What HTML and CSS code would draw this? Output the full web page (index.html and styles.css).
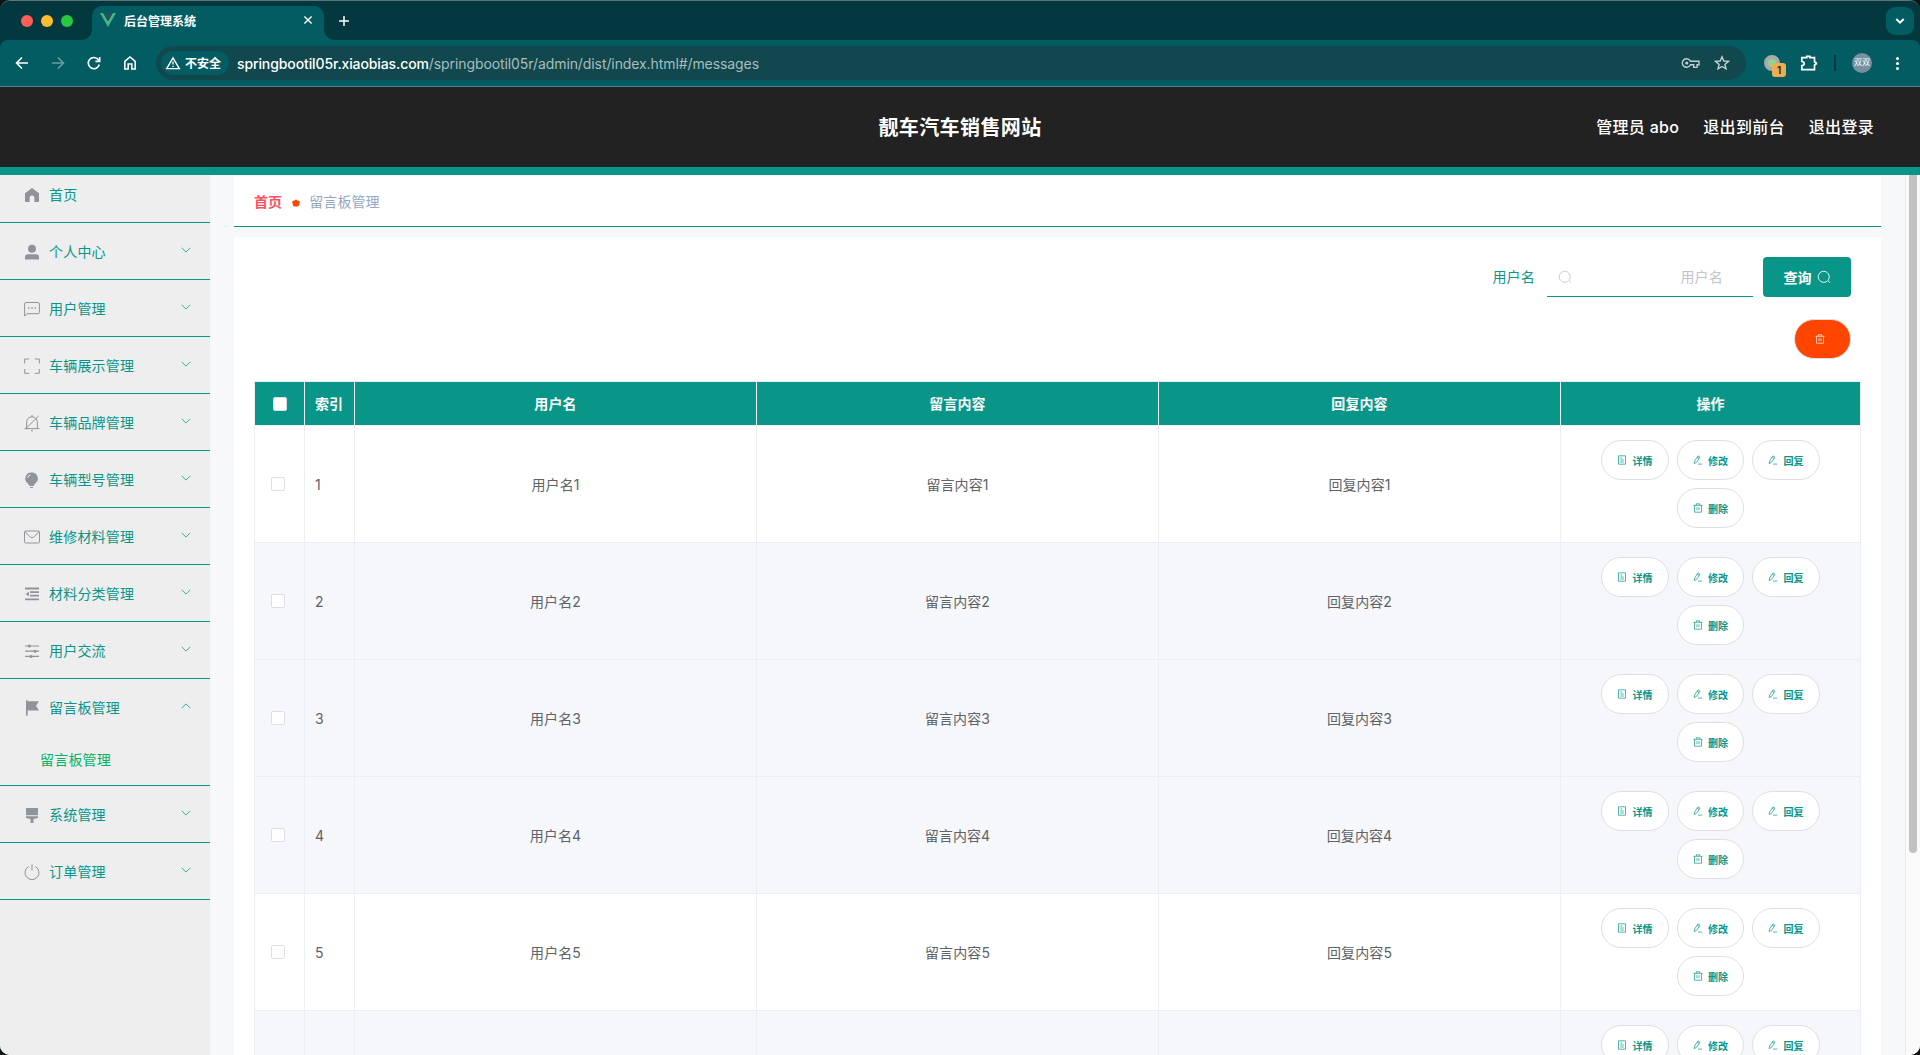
FILE: index.html
```html
<!DOCTYPE html>
<html lang="zh-CN">
<head>
    <meta charset="UTF-8">
    <meta name="viewport" content="width=device-width, initial-scale=1.0">
    <title>后台管理系统</title>
    <link rel="stylesheet" href="styles.css">
</head>
<body>
    <!-- Icons -->
    <svg class="defs" width="0" height="0">
        <symbol id="down" viewBox="0 0 10 10"><path d="M.7 2.8 5 7.1l4.3-4.3" fill="none" stroke="currentColor" stroke-width=".75"/></symbol>
        <symbol id="search" viewBox="0 0 14 14"><path d="M10.4 10.900a5.500 5.500 0 1 1 .4-.4l2.200 2.200" fill="none" stroke="currentColor" stroke-width=".9"/></symbol>
        <symbol id="doc" viewBox="0 0 10 10"><path d="M1.5.8h7v8.4h-7zM3.3 3h2M3.3 5h3.5M3.3 7h3.5" fill="none" stroke="currentColor" stroke-width=".7"/></symbol>
        <symbol id="edit" viewBox="0 0 10 10"><path d="M1.2 8.6 1.6 6 5 .9l2 1.3L3.5 7.4zM4.2 2.2l2 1.3M5 9.1h4.2" fill="none" stroke="currentColor" stroke-width=".7"/></symbol>
        <symbol id="trash" viewBox="0 0 10 10"><path d="M.5 2.300h9M3.300 2V.8h3.400V2M1.500 2.300v6.900h7V2.300M4 4.200v3M6 4.200v3" fill="none" stroke="currentColor" stroke-width=".7"/></symbol>
    </svg>

    <div class="window">
        <!-- Tab strip -->
        <div class="tabs">
            <div class="lights"><i class="red"></i><i class="yellow"></i><i class="green"></i></div>
            <div class="tab">
                <svg width="16" height="14" viewBox="0 0 16 14"><path d="M0 0h3.2L8 8.3 12.8 0H16L8 14z" fill="#41b883"/><path d="M3.2 0H6l2 3.4L10 0h2.8L8 8.3z" fill="#35495e"/></svg>
                <span>后台管理系统</span>
                <svg class="close" width="10" height="10" viewBox="0 0 10 10"><path d="M1.4 1.4l7.2 7.2M8.6 1.4 1.4 8.6" stroke="#fff" stroke-width="1.4"/></svg>
            </div>
            <svg class="plus" width="12" height="12" viewBox="0 0 12 12"><path d="M6 1v10M1 6h10" stroke="#fff" stroke-width="1.5"/></svg>
            <div class="tab-list"><svg width="10" height="8" viewBox="0 0 10 8"><path d="M1.3 2 5 5.7 8.7 2" fill="none" stroke="#fff" stroke-width="2"/></svg></div>
        </div>

        <!-- Address bar -->
        <div class="toolbar">
            <svg class="nav" viewBox="0 0 16 16"><path d="M14 8H3M8 2.5 2.5 8 8 13.5" /></svg>
            <svg class="nav dim" viewBox="0 0 16 16"><path d="M2 8h11M8 2.5 13.5 8 8 13.5" /></svg>
            <svg class="nav" viewBox="0 0 16 16"><path d="M13.3 9.5A5.6 5.6 0 1 1 12.3 4.6L13.5 6M13.7 2v4.4H9.4" /></svg>
            <svg class="nav" viewBox="0 0 16 16"><path d="M2.8 14V6.3L8 2l5.2 4.3V14H9.8V9H6.2v5z" /></svg>
            <div class="url">
                <div class="unsafe">
                    <svg width="16" height="14" viewBox="0 0 16 14"><path d="M8 1.8 14.3 12.6H1.7z" fill="none" stroke="#fff" stroke-width="1.4"/><path d="M8 5.5v3M8 9.7v1.4" stroke="#fff" stroke-width="1.3"/></svg>
                    <span>不安全</span>
                </div>
                <div class="address"><b>springbootil05r.xiaobias.com</b>/springbootil05r/admin/dist/index.html#/messages</div>
                <svg class="key" width="20" height="14" viewBox="0 0 20 14"><path d="M9.5 5.2A4.3 4.3 0 1 0 9.5 8.8h3.2v2.6h3.4V8.8H18V5.2z" fill="none" stroke="#c2d0d1" stroke-width="1.4"/><circle cx="5.8" cy="7" r="1.6" fill="#c2d0d1"/></svg>
                <svg width="16" height="16" viewBox="0 0 16 16"><path d="M8 1.8 9.8 6l4.6.4-3.5 3 1.1 4.5L8 11.5l-4 2.4 1.1-4.5-3.5-3L6.2 6z" fill="none" stroke="#c2d0d1" stroke-width="1.4"/></svg>
            </div>
            <div class="ext"><i></i><span>1</span></div>
            <svg class="puzzle" width="18" height="18" viewBox="0 0 18 18"><path d="M1.800 3.600h4.900V2.400h3.200v1.200h4.600v4.100l1.800 1.300v.8l-1.800 1.300v4.500H1.800v-3.900q2.400-.4 2.400-2.200T1.800 7.300z" fill="none" stroke="#fff" stroke-width="1.700"/></svg>
            <div class="divider"></div>
            <div class="avatar">双双</div>
            <div class="dots"><i></i><i></i><i></i></div>
        </div>

        <!-- Page header -->
        <header class="header">
            <div class="title">靓车汽车销售网站</div>
            <div class="user"><span>管理员 abo</span><span>退出到前台</span><span>退出登录</span></div>
        </header>

        <div class="container">
            <!-- Side menu -->
            <nav class="menu">
                <div class="item"><svg class="icon" viewBox="0 0 18 18"><path d="M9 2 2 7.2V16h4.600v-4a2.400 2.400 0 0 1 4.800 0v4H16V7.200z" fill="currentColor"/></svg><span>首页</span></div>
                <div class="item"><svg class="icon" viewBox="0 0 18 18"><path d="M2 16.4v-2.2q0-3 3-3h8q3 0 3 3v2.2z" fill="currentColor"/><circle cx="9" cy="5.7" r="4" fill="currentColor"/></svg><span>个人中心</span><svg class="arrow"><use href="#down"/></svg></div>
                <div class="item"><svg class="icon line" viewBox="0 0 18 18"><path d="M1.6 16V4q0-1.5 1.5-1.5h11.8q1.5 0 1.5 1.5v8.5q0 1.2-1.5 1.2H4z"/><path d="M5 8h1.4M8.3 8h1.4M11.6 8H13" stroke-width="1.4"/></svg><span>用户管理</span><svg class="arrow"><use href="#down"/></svg></div>
                <div class="item"><svg class="icon line" viewBox="0 0 18 18"><path d="M1.7 6.5V2h4.5M11.8 2h4.5v4.5M16.3 12v4.3h-4.5M6.2 16.3H1.7V12"/></svg><span>车辆展示管理</span><svg class="arrow"><use href="#down"/></svg></div>
                <div class="item"><svg class="icon line" viewBox="0 0 18 18"><path d="M1.5 14.6h15M3.6 14V8.2a5.4 5.4 0 0 1 10.8 0V14M15.6 2 2.4 15M8 16.7h2M8.2 1.8h1.6"/></svg><span>车辆品牌管理</span><svg class="arrow"><use href="#down"/></svg></div>
                <div class="item"><svg class="icon" viewBox="0 0 18 18"><path d="M8.4 1.4a6 6 0 0 0-3.4 11L6.5 15h4l1.6-2.6a6 6 0 0 0-3.7-11zM7 16h3v.9H7z" fill="currentColor"/><path d="M4.6 6.8a4 4 0 0 1 3-3" fill="none" stroke="#eee" stroke-width=".9"/></svg><span>车辆型号管理</span><svg class="arrow"><use href="#down"/></svg></div>
                <div class="item"><svg class="icon line" viewBox="0 0 18 18"><rect x="1.5" y="3" width="15" height="12" rx="1.2"/><path d="M2 3.8l5.4 5.4q1.6 1.3 3.2 0L16 3.8"/></svg><span>维修材料管理</span><svg class="arrow"><use href="#down"/></svg></div>
                <div class="item"><svg class="icon" viewBox="0 0 18 18"><path d="M2 3.5h14M7 7.2h9M7 10.7h9M2 14.3h14" stroke="currentColor" stroke-width="1.8"/><path d="M6 6.7v4.5L2.5 9z" fill="currentColor"/></svg><span>材料分类管理</span><svg class="arrow"><use href="#down"/></svg></div>
                <div class="item"><svg class="icon" viewBox="0 0 18 18"><path d="M2 4h14M2 9.2h14M2 14.4h14" stroke="currentColor" stroke-width="1.2"/><circle cx="6.4" cy="4" r="1.5" fill="currentColor"/><circle cx="12" cy="9.2" r="1.5" fill="currentColor"/><circle cx="8" cy="14.4" r="1.5" fill="currentColor"/></svg><span>用户交流</span><svg class="arrow"><use href="#down"/></svg></div>
                <div class="item open"><svg class="icon" viewBox="0 0 18 18"><path d="M3 1.2h1.6v1H16l-3 4.6 3 4.7H4.6v5.3H3z" fill="currentColor"/></svg><span>留言板管理</span><svg class="arrow up"><use href="#down"/></svg></div>
                <div class="sub">留言板管理</div>
                <div class="item"><svg class="icon" viewBox="0 0 18 18"><path d="M3 2h12v7.3H3zM3 10.3h12v1.4q-1 1-3.5 1h-1V17h-3v-4.3h-1q-2.5 0-3.5-1z" fill="currentColor"/></svg><span>系统管理</span><svg class="arrow"><use href="#down"/></svg></div>
                <div class="item"><svg class="icon line" viewBox="0 0 18 18"><path d="M5.6 3.5a7 7 0 1 0 6.8 0M9 1.4v6"/></svg><span>订单管理</span><svg class="arrow"><use href="#down"/></svg></div>
            </nav>

            <main class="main">
                <div class="breadcrumb">
                    <b>首页</b>
                    <svg class="dot" width="8" height="8" viewBox="0 0 8 8"><path d="M4 .2 5.200 1.500q2.800-.2 2.500 2.200L6.700 7q-2.700 1-5.400 0L.3 3.700Q0 1.300 2.800 1.500z" fill="#ff4500"/></svg>
                    <span>留言板管理</span>
                </div>

                <div class="card">
                    <div class="filter">
                        <label>用户名</label>
                        <div class="input"><svg width="14" height="14"><use href="#search"/></svg><span>用户名</span></div>
                        <div class="query">查询<svg width="14" height="14"><use href="#search"/></svg></div>
                    </div>
                    <div class="batch"><svg width="10" height="10"><use href="#trash"/></svg></div>

                    <table class="table">
                        <tr><th class="check"><i></i></th><th class="idx">索引</th><th>用户名</th><th>留言内容</th><th>回复内容</th><th class="ops">操作</th></tr>
                        <tr>
                            <td class="check"><i></i></td><td class="idx">1</td><td>用户名1</td><td>留言内容1</td><td>回复内容1</td>
                            <td><div class="btns">
                                <span class="btn"><svg><use href="#doc"/></svg>详情</span><span class="btn mid"><svg><use href="#edit"/></svg>修改</span><span class="btn"><svg><use href="#edit"/></svg>回复</span><span class="btn mid"><svg><use href="#trash"/></svg>删除</span>
                            </div></td>
                        </tr>
                        <tr class="grey">
                            <td class="check"><i></i></td><td class="idx">2</td><td>用户名2</td><td>留言内容2</td><td>回复内容2</td>
                            <td><div class="btns">
                                <span class="btn"><svg><use href="#doc"/></svg>详情</span><span class="btn mid"><svg><use href="#edit"/></svg>修改</span><span class="btn"><svg><use href="#edit"/></svg>回复</span><span class="btn mid"><svg><use href="#trash"/></svg>删除</span>
                            </div></td>
                        </tr>
                        <tr class="grey">
                            <td class="check"><i></i></td><td class="idx">3</td><td>用户名3</td><td>留言内容3</td><td>回复内容3</td>
                            <td><div class="btns">
                                <span class="btn"><svg><use href="#doc"/></svg>详情</span><span class="btn mid"><svg><use href="#edit"/></svg>修改</span><span class="btn"><svg><use href="#edit"/></svg>回复</span><span class="btn mid"><svg><use href="#trash"/></svg>删除</span>
                            </div></td>
                        </tr>
                        <tr class="grey">
                            <td class="check"><i></i></td><td class="idx">4</td><td>用户名4</td><td>留言内容4</td><td>回复内容4</td>
                            <td><div class="btns">
                                <span class="btn"><svg><use href="#doc"/></svg>详情</span><span class="btn mid"><svg><use href="#edit"/></svg>修改</span><span class="btn"><svg><use href="#edit"/></svg>回复</span><span class="btn mid"><svg><use href="#trash"/></svg>删除</span>
                            </div></td>
                        </tr>
                        <tr>
                            <td class="check"><i></i></td><td class="idx">5</td><td>用户名5</td><td>留言内容5</td><td>回复内容5</td>
                            <td><div class="btns">
                                <span class="btn"><svg><use href="#doc"/></svg>详情</span><span class="btn mid"><svg><use href="#edit"/></svg>修改</span><span class="btn"><svg><use href="#edit"/></svg>回复</span><span class="btn mid"><svg><use href="#trash"/></svg>删除</span>
                            </div></td>
                        </tr>
                        <!-- last row runs past the bottom of the window -->
                        <tr class="grey">
                            <td></td><td></td><td></td><td></td><td></td>
                            <td><div class="btns">
                                <span class="btn"><svg><use href="#doc"/></svg>详情</span><span class="btn mid"><svg><use href="#edit"/></svg>修改</span><span class="btn"><svg><use href="#edit"/></svg>回复</span>
                            </div></td>
                        </tr>
                    </table>
                </div>
            </main>
            <div class="scrollbar"><div class="thumb"></div></div>
        </div>
    </div>
</body>
</html>
```
FILE: styles.css
```css
* {
    box-sizing: border-box;
}
body {
    margin: 0;
    background-color: #10150f;
    font-family: Inter, "Noto Sans CJK SC", sans-serif;
    font-size: 14px;
    overflow: hidden;
}
svg {
    display: block;
    flex: none;
}
.defs {
    position: absolute;
}
.window {
    height: 1055px;
    display: flex;
    flex-direction: column;
    border-top: 1px solid #5d7676;
    border-radius: 10px;
    overflow: hidden;
    background-color: #03393e;
}

/* browser tabs */
.tabs {
    height: 39px;
    flex: none;
    display: flex;
    align-items: center;
    background-color: #03393e;
}
.lights {
    display: flex;
    gap: 8px;
    padding-left: 21px;
    width: 92px;
}
.lights i {
    width: 12px;
    height: 12px;
    border-radius: 50%;
}
.red { background-color: #ff5f57; }
.yellow { background-color: #febc2e; }
.green { background-color: #28c840; }
.tab {
    position: relative;
    align-self: flex-end;
    width: 232px;
    height: 34px;
    padding: 0 11px 6px 8px;
    display: flex;
    align-items: center;
    gap: 8px;
    border-radius: 10px 10px 0 0;
    background-color: #045c63;
    color: #fff;
    font-size: 12px;
    font-weight: 600;
}
.tab::before,
.tab::after {
    content: "";
    position: absolute;
    bottom: 0;
    width: 10px;
    height: 10px;
}
.tab::before {
    left: -10px;
    background: radial-gradient(circle at 0 0, transparent 9.5px, #045c63 10px);
}
.tab::after {
    right: -10px;
    background: radial-gradient(circle at 100% 0, transparent 9.5px, #045c63 10px);
}
.close {
    margin-left: auto;
}
.plus {
    margin-left: 14px;
}
.tab-list {
    width: 28px;
    height: 28px;
    margin-left: auto;
    margin-right: 6px;
    border-radius: 9px;
    background-color: #045c63;
    display: flex;
    align-items: center;
    justify-content: center;
}

/* browser toolbar */
.toolbar {
    height: 47px;
    flex: none;
    display: flex;
    align-items: center;
    padding-left: 14px;
    border-radius: 8px 8px 0 0;
    border-bottom: 1px solid #4f878b;
    background-color: #045c63;
}
.nav {
    width: 16px;
    height: 16px;
    margin-right: 20px;
    fill: none;
    stroke: #fff;
    stroke-width: 1.6;
}
.dim {
    opacity: .4;
}
.url {
    width: 1590px;
    height: 34px;
    margin-left: -2px;
    padding: 0 16px 0 5px;
    border-radius: 17px;
    display: flex;
    align-items: center;
    background-color: #10484e;
}
.unsafe {
    width: 68px;
    height: 24px;
    padding-left: 4px;
    border-radius: 12px;
    display: flex;
    align-items: center;
    gap: 4px;
    background-color: #045c63;
    color: #fff;
    font-size: 12px;
    font-weight: 600;
}
.unsafe span {
    margin-top: -2px;
}
.address {
    margin-left: 8px;
    flex: 1;
    color: #a9bdbf;
    font-size: 14px;
    letter-spacing: -.09px;
}
.address b {
    color: #fff;
    font-weight: 500;
    letter-spacing: -.11px;
}
.key {
    margin-right: 13px;
}
.ext {
    position: relative;
    width: 22px;
    height: 24px;
    margin-left: 18px;
}
.ext i {
    position: absolute;
    top: 4px;
    width: 16px;
    height: 16px;
    border-radius: 50%;
    border: 4px solid #a9a9a9;
    background-color: #8fd694;
}
.ext span {
    position: absolute;
    left: 8px;
    top: 12px;
    width: 14px;
    height: 14px;
    border-radius: 3px;
    background-color: #f0ad4e;
    color: #222;
    font-size: 10px;
    font-weight: 600;
    line-height: 14px;
    text-align: center;
}
.puzzle {
    margin-left: 14px;
}
.divider {
    width: 2px;
    height: 16px;
    margin: 0 16px;
    background-color: #03393e;
}
.avatar {
    width: 20px;
    height: 20px;
    border-radius: 50%;
    background-color: #78909c;
    color: #fff;
    font-size: 8px;
    line-height: 19px;
    text-align: center;
}
.dots {
    display: flex;
    flex-direction: column;
    gap: 2px;
    margin-left: 24px;
}
.dots i {
    width: 3px;
    height: 3px;
    border-radius: 50%;
    background-color: #fff;
}

/* page header */
.header {
    height: 88px;
    flex: none;
    display: grid;
    grid-template-columns: 1fr auto 1fr;
    align-items: center;
    padding: 0 46px 2px;
    border-bottom: 8px solid #099587;
    background-color: #222;
    color: #fff;
}
.title {
    grid-column: 2;
    font-size: 20px;
    font-weight: 700;
    letter-spacing: .4px;
}
.user {
    display: flex;
    justify-content: flex-end;
    gap: 24px;
    font-size: 16px;
    font-weight: 500;
    letter-spacing: .3px;
}
.container {
    flex: 1;
    min-height: 0;
    display: flex;
    background-color: #f7f8fa;
}

/* side menu */
.menu {
    width: 210px;
    flex: none;
    margin-top: -9px;
    background-color: #eee;
    color: #099587;
    letter-spacing: .2px;
    clip-path: inset(9px 0 0 0);
}
.item {
    height: 57px;
    display: flex;
    align-items: center;
    padding: 1px 19px 0 23px;
    border-bottom: 1px solid #099587;
}
.item span {
    line-height: 20px;
}
.icon {
    width: 18px;
    height: 18px;
    margin-right: 8px;
    color: #909399;
}
.line {
    fill: none;
    stroke: currentColor;
}
.arrow {
    width: 10px;
    height: 10px;
    margin-left: auto;
    margin-top: -4px;
}
.up {
    transform: rotate(180deg);
}
.open {
    height: 56px;
    border-bottom: 0;
}
.sub {
    height: 51px;
    padding-left: 40px;
    border-bottom: 1px solid #099587;
    color: #00b368;
    line-height: 50px;
}

/* content */
.main {
    flex: 1;
    padding: 1px 24px 0;
    overflow: hidden;
}
.breadcrumb {
    height: 51px;
    padding-left: 20px;
    display: flex;
    align-items: center;
    gap: 10px;
    border-bottom: 1px solid #099587;
    background-color: #fff;
    color: #97a8be;
    letter-spacing: .1px;
}
.breadcrumb b {
    color: #ff4f5e;
    font-weight: 600;
}
.dot {
    margin: 3px -1px 0 0;
}
.card {
    height: 900px;
    margin-top: 10px;
    padding: 20px;
    background-color: #fff;
}
.filter {
    display: flex;
    justify-content: flex-end;
    padding-right: 10px;
}
.filter label {
    line-height: 40px;
    color: #099587;
    letter-spacing: .2px;
    margin-right: 12px;
}
.input {
    width: 206px;
    height: 40px;
    padding: 0 30px 0 11px;
    margin-right: 10px;
    display: flex;
    align-items: center;
    justify-content: space-between;
    border-bottom: 1px solid #099587;
    color: #c0c4cc;
    letter-spacing: .2px;
}
.input span {
    margin-top: -1px;
}
.query {
    width: 88px;
    height: 40px;
    display: flex;
    align-items: center;
    justify-content: center;
    gap: 5px;
    border-radius: 4px;
    background-color: #099587;
    color: #fff;
    font-weight: 700;
}
.batch {
    width: 57px;
    height: 40px;
    margin: 22px 10px 22px auto;
    padding-right: 5px;
    display: flex;
    align-items: center;
    justify-content: center;
    border: 1px solid #dcdfe6;
    border-radius: 20px;
    background-color: #ff4500;
    color: #fff;
}
.table {
    width: 1607px;
    table-layout: fixed;
    border-collapse: separate;
    border-spacing: 0;
    border-top: 1px solid #ebeef5;
    border-left: 1px solid #ebeef5;
    color: #606266;
    letter-spacing: .1px;
}
.table th,
.table td {
    height: 117px;
    padding: 0;
    border-right: 1px solid #ebeef5;
    border-bottom: 1px solid #ebeef5;
    text-align: center;
}
.table th {
    height: 44px;
    padding-bottom: 2px;
    background-color: #099587;
    color: #fff;
    font-weight: 700;
}
.table .check {
    width: 50px;
    padding-bottom: 0;
}
.table .idx {
    width: 50px;
    padding-left: 10px;
    text-align: left;
}
.table .ops {
    width: 300px;
}
.check i {
    display: block;
    width: 14px;
    height: 14px;
    margin: 0 auto 0 16px;
    border: 1px solid #dcdfe6;
    border-radius: 2px;
    background-color: #fff;
}
th.check i {
    margin-left: 18px;
}
.grey {
    background-color: #f5f7fa;
}
.btns {
    height: 88px;
    display: flex;
    flex-wrap: wrap;
    align-content: flex-start;
    justify-content: center;
    gap: 8px;
    padding: 0 30px;
}
.btn {
    width: 68px;
    height: 40px;
    display: flex;
    align-items: center;
    justify-content: center;
    gap: 5px;
    border: 1px solid #dcdfe6;
    border-radius: 20px;
    background-color: #fff;
    color: #099587;
    font-size: 10px;
    font-weight: 700;
}
.mid {
    width: 67px;
}
.btn svg {
    width: 10px;
    height: 10px;
}

/* page scrollbar */
.scrollbar {
    width: 15px;
    padding-left: 3px;
    border-left: 1px solid #e8e8e8;
    background-color: #fafafa;
}
.thumb {
    width: 8px;
    height: 678px;
    border-radius: 0 0 4px 4px;
    background-color: #c1c1c1;
}
```
